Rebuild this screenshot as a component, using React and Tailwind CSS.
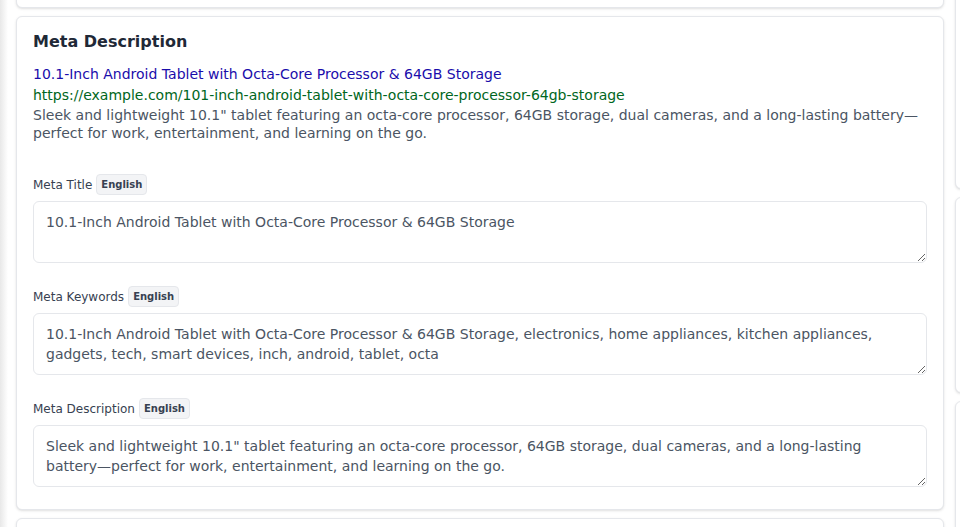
import React from "react";

const fields = [
  {
    label: "Meta Title",
    value: "10.1-Inch Android Tablet with Octa-Core Processor & 64GB Storage",
  },
  {
    label: "Meta Keywords",
    value:
      "10.1-Inch Android Tablet with Octa-Core Processor & 64GB Storage, electronics, home appliances, kitchen appliances, gadgets, tech, smart devices, inch, android, tablet, octa",
  },
  {
    label: "Meta Description",
    value:
      'Sleek and lightweight 10.1" tablet featuring an octa-core processor, 64GB storage, dual cameras, and a long-lasting battery\u2014perfect for work, entertainment, and learning on the go.',
  },
];

function Field({ label, value, first }) {
  return (
    <div className={first ? "mt-8" : "mt-[23px]"}>
      <div className="flex items-center gap-1 h-[21px]">
        <span className="text-xs text-[#374151]">{label}</span>
        <span className="h-[21px] flex items-center px-1 rounded border border-[#e5e7eb] bg-[#f3f4f6] text-[10px] font-bold text-[#374151]">
          English
        </span>
      </div>
      <textarea
        readOnly
        rows={2}
        defaultValue={value}
        className="mt-1.5 block w-full rounded-md border border-[#e5e7eb] bg-white px-3 py-2.5 text-sm leading-5 text-[#4b5563] outline-none"
      />
    </div>
  );
}

export default function App() {
  return (
    <div className="w-[960px] h-[527px] overflow-hidden bg-[linear-gradient(to_right,#e8e8e8,#ffffff_8px)] font-['DejaVu_Sans',sans-serif]">
      <div className="flex gap-[11px] pl-4">
        <div className="w-[928px] shrink-0 flex flex-col gap-2">
          <div className="-mt-[92px] h-[100px] rounded-md border border-[#e5e7eb] bg-white shadow-sm" />
          <div className="rounded-md border border-[#e5e7eb] bg-white shadow-sm px-4 pt-[13px] pb-[22px]">
            <h2 className="text-base leading-6 font-bold text-[#1f2937]">Meta Description</h2>
            <div className="mt-[10px] text-sm leading-[21px] text-[#1a0dab]">
              10.1-Inch Android Tablet with Octa-Core Processor &amp; 64GB Storage
            </div>
            <div className="text-sm leading-[21px] text-[#006621]">
              https://example.com/101-inch-android-tablet-with-octa-core-processor-64gb-storage
            </div>
            <p className="mt-px text-sm leading-[17.5px] text-[#4b5563]">
              Sleek and lightweight 10.1" tablet featuring an octa-core processor, 64GB storage, dual cameras, and a long-lasting battery—perfect for work, entertainment, and learning on the go.
            </p>
            {fields.map((f, i) => (
              <Field key={f.label} label={f.label} value={f.value} first={i === 0} />
            ))}
          </div>
          <div className="h-[100px] rounded-md border border-[#e5e7eb] bg-white shadow-sm" />
        </div>
        <div className="w-[300px] shrink-0 flex flex-col gap-2">
          <div className="-mt-[50px] h-[239px] rounded-md border border-[#e5e7eb] bg-white shadow-sm" />
          <div className="h-[196px] rounded-md border border-[#e5e7eb] bg-white shadow-sm" />
          <div className="h-[200px] rounded-md border border-[#e5e7eb] bg-white shadow-sm" />
        </div>
      </div>
    </div>
  );
}
